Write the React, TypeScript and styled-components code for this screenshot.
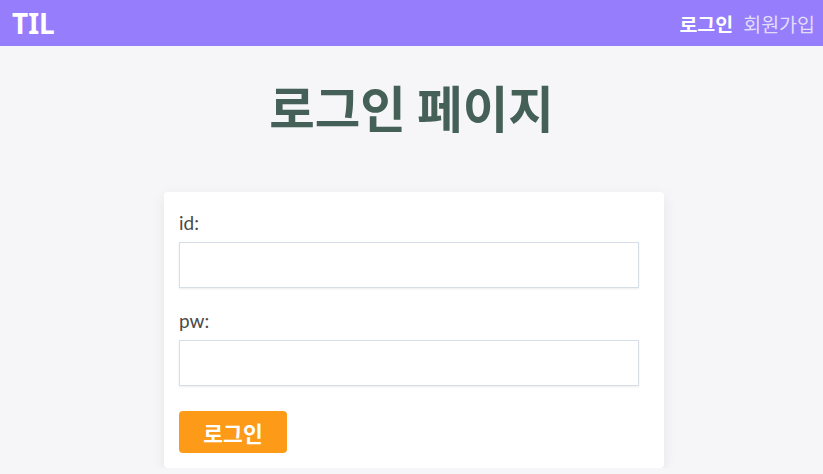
import React from "react";
import styled, { createGlobalStyle } from "styled-components";

const Global = createGlobalStyle`
  html, body { margin: 0; padding: 0; }
  body {
    background: #f6f6f8;
    font-family: "Noto Sans CJK KR", "Noto Sans", sans-serif;
  }
  * { box-sizing: border-box; }
`;

const Header = styled.header`
  height: 46px;
  background: #957dfc;
  display: flex;
  align-items: center;
  justify-content: space-between;
  padding: 0 8px 0 12px;
`;

const Logo = styled.div`
  color: #fff;
  font-family: "Noto Sans", sans-serif;
  font-weight: 700;
  font-size: 28px;
`;

const Nav = styled.nav`
  display: flex;
  gap: 10px;
  align-items: center;
`;

const NavLink = styled.a<{ $active?: boolean }>`
  font-family: "Noto Sans CJK KR", sans-serif;
  font-size: 19.5px;
  font-weight: ${(p) => (p.$active ? 700 : 400)};
  color: ${(p) => (p.$active ? "#ffffff" : "#e2ddf7")};
  text-decoration: none;
`;

const Main = styled.main`
  display: flex;
  flex-direction: column;
  align-items: center;
`;

const Title = styled.h1`
  margin: 30px 0 54px;
  font-family: "Noto Sans CJK KR", sans-serif;
  font-size: 49.5px;
  line-height: 62px;
  font-weight: 700;
  color: #456157;
`;

const Card = styled.form`
  width: 500px;
  margin-left: 5px;
  background: #fff;
  border-radius: 4px;
  box-shadow: 0 4px 14px rgba(0, 0, 0, 0.07);
  padding: 20px 15px 15px;
  display: flex;
  flex-direction: column;
`;

const Label = styled.label`
  font-family: "Lato", sans-serif;
  font-size: 19px;
  line-height: 22px;
  color: #4a4a4a;
  margin-bottom: 8px;
`;

const Input = styled.input`
  width: 460px;
  height: 46px;
  border: 1.5px solid #d6dee7;
  background: #fff;
  box-shadow: 0 1px 2px rgba(0, 0, 0, 0.08);
  outline: none;
  margin-bottom: 22px;
  padding: 0 10px;
  font-size: 16px;
`;

const Button = styled.button`
  width: 108px;
  height: 42px;
  margin-top: 3px;
  background: #fd9a17;
  color: #fff;
  border: none;
  border-radius: 4px;
  font-family: "Noto Sans CJK KR", sans-serif;
  font-weight: 700;
  font-size: 21.5px;
  cursor: pointer;
`;

export default function App() {
  return (
    <>
      <Global />
      <Header>
        <Logo>TIL</Logo>
        <Nav>
          <NavLink $active>로그인</NavLink>
          <NavLink>회원가입</NavLink>
        </Nav>
      </Header>
      <Main>
        <Title>로그인 페이지</Title>
        <Card onSubmit={(e) => e.preventDefault()}>
          <Label>id:</Label>
          <Input type="text" />
          <Label>pw:</Label>
          <Input type="password" />
          <Button type="submit">로그인</Button>
        </Card>
      </Main>
    </>
  );
}
